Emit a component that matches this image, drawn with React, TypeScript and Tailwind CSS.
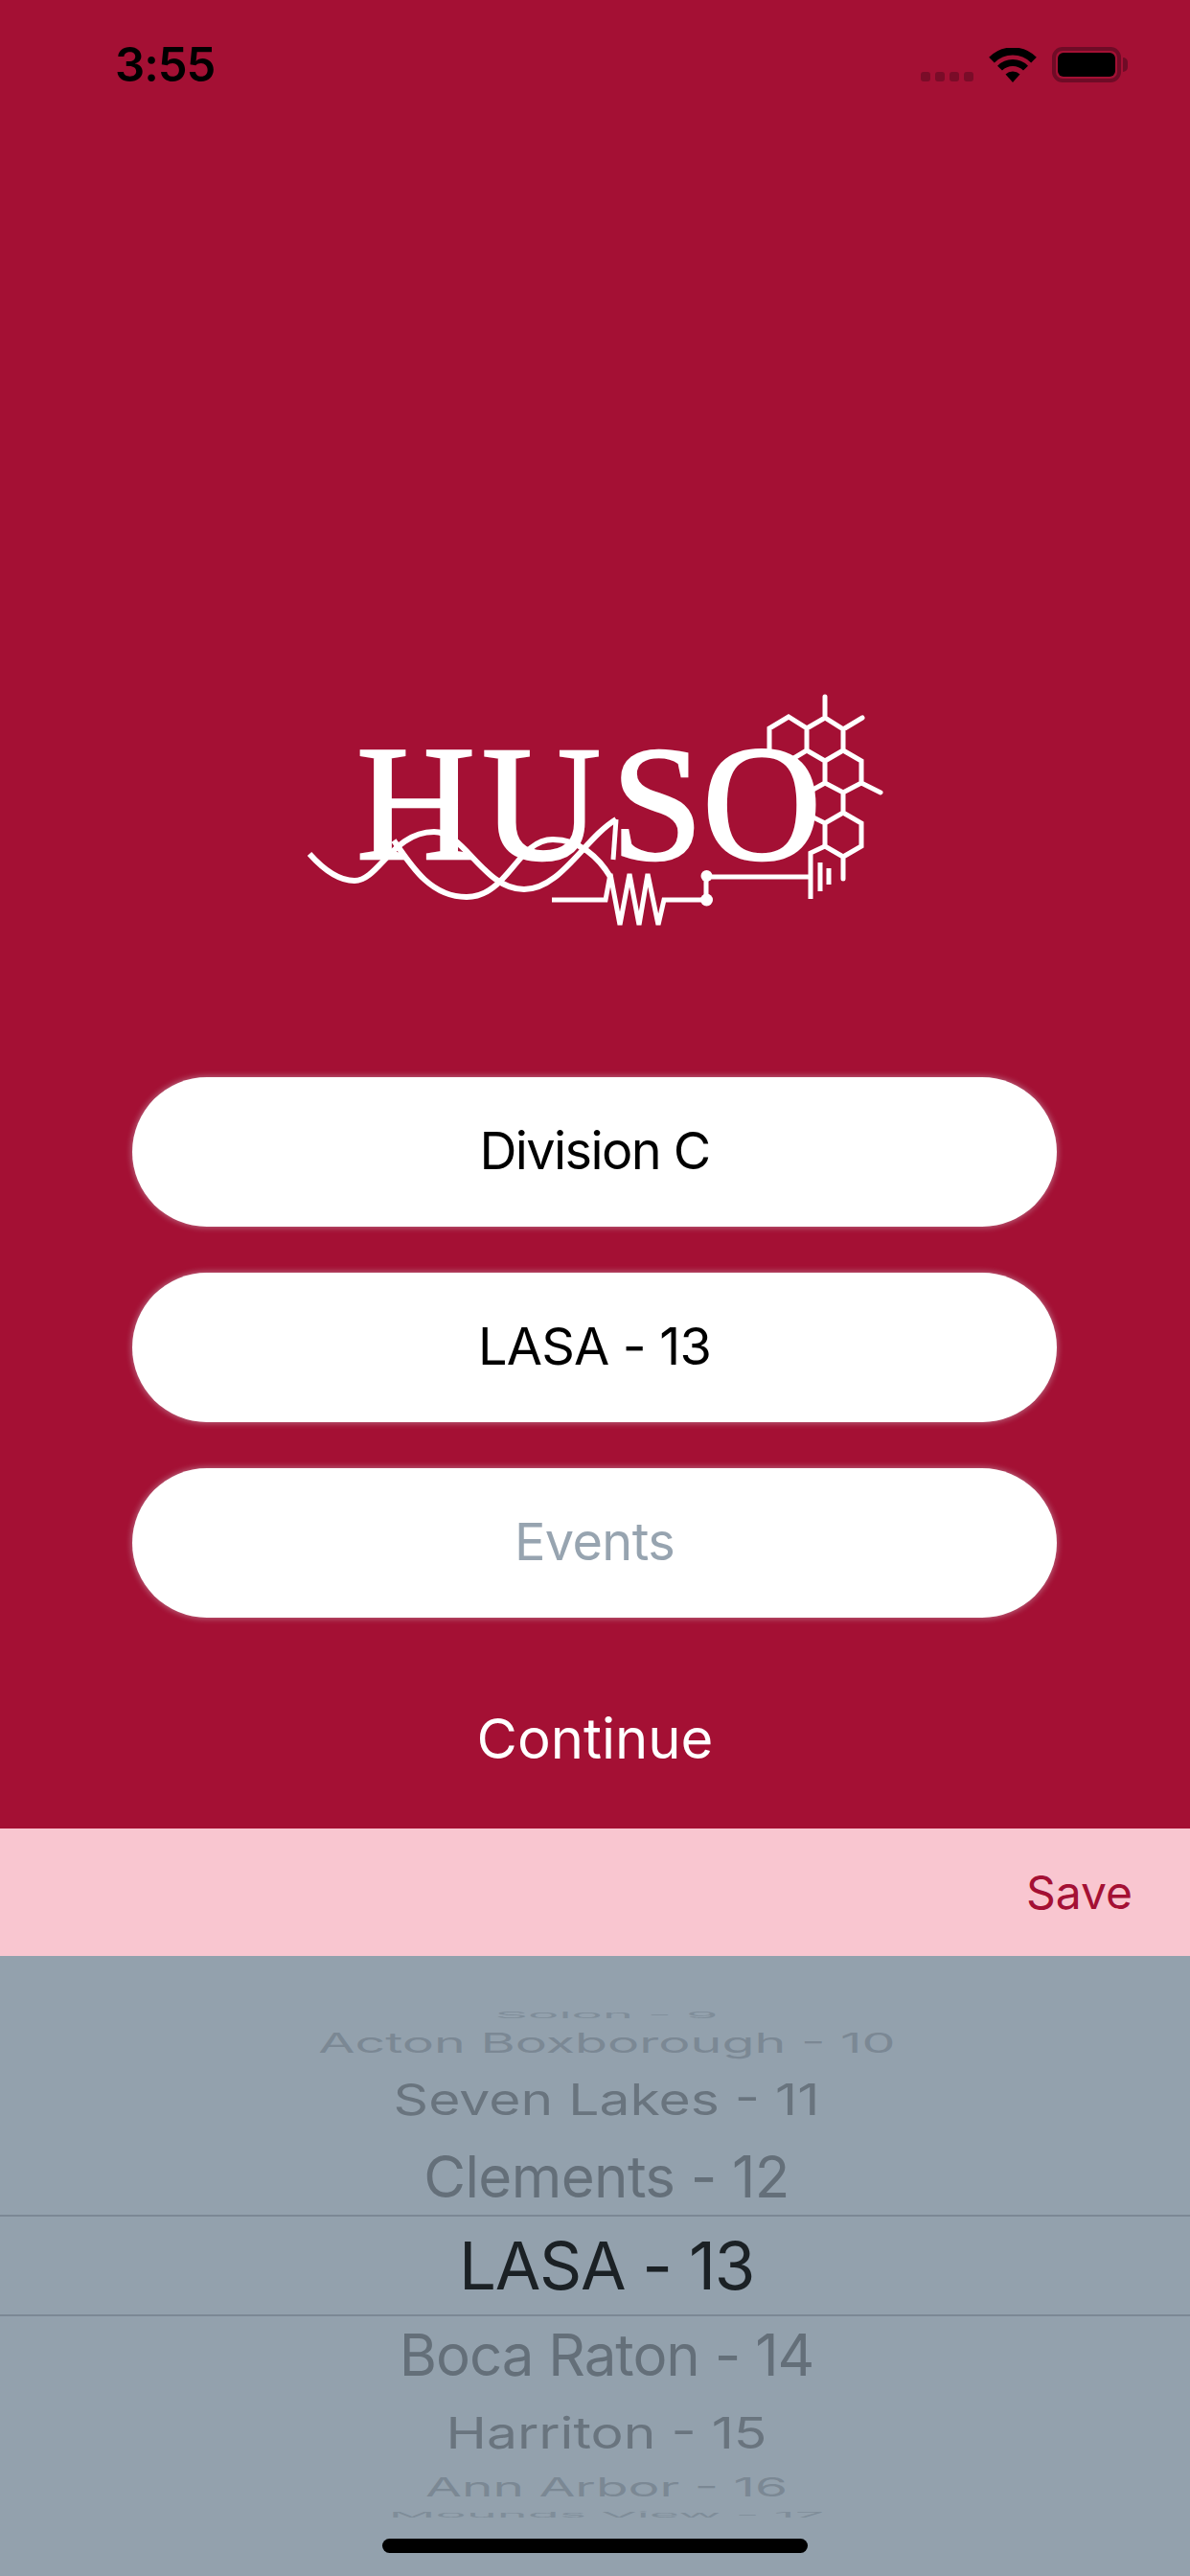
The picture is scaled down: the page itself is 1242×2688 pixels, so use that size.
const pickerRows = [
  { label: "Solon - 9", row: "h-[24px]", text: "text-[54px] scale-y-[0.17] text-[#7f8d99]" },
  { label: "Acton Boxborough - 10", row: "h-[34px]", text: "text-[50px] scale-y-[0.58] scale-x-[1.11] text-[#7b8894]" },
  { label: "Seven Lakes - 11", row: "h-[82px]", text: "text-[57px] scale-y-[0.8] text-[#69747e]" },
  { label: "Clements - 12", row: "h-[80px]", text: "text-[60px] tracking-[-0.6px] text-[#646f79]" },
];

const lowerRows = [
  { label: "Boca Raton - 14", row: "h-[80px]", text: "text-[60px] tracking-[-1px] text-[#646f79]" },
  { label: "Harriton - 15", row: "h-[82px]", text: "text-[57px] scale-y-[0.8] text-[#69747e]" },
  { label: "Ann Arbor - 16", row: "h-[32px]", text: "text-[55px] scale-y-[0.5] text-[#7b8894]" },
  { label: "Mounds View - 17", row: "h-[26px]", text: "text-[54px] scale-y-[0.14] text-[#7f8d99]" },
];

const PickerRow = ({ label, row, text }: { label: string; row: string; text: string }) => (
  <div className={`flex items-center justify-center pl-[24px] ${row}`}>
    <span className={`whitespace-nowrap leading-none ${text}`}>{label}</span>
  </div>
);

const Logo = () => (
  <svg
    viewBox="320 720 602 255"
    width="602"
    height="255"
    className="mx-auto block"
    fill="none"
    stroke="#fff"
  >
    <text
      x="372 503 638 733"
      y="896"
      fill="#fff"
      stroke="#fff"
      strokeWidth="2.5"
      fontFamily="'Liberation Serif', serif"
      fontSize="172"
    >
      HUSO
    </text>
    {/* waves */}
    <path
      d="M323 891 C340 910 355 919 370 919 C395 919 410 868 453 868 C485 868 505 928 547 928 C585 928 610 875 643 855"
      strokeWidth="6"
    />
    <path
      d="M411 877 C430 905 450 936 487 936 C530 936 540 876 577 876 C605 876 625 895 637 915"
      strokeWidth="6"
    />
    <path d="M643 855 L640 897" strokeWidth="5" />
    {/* resistor */}
    <path
      d="M576 939 H632 L637 912 L647 965 L657 912 L667 965 L676 912 L687 965 L693 939 H737 V915 H846"
      strokeWidth="5"
    />
    <circle cx="737.5" cy="939" r="6.5" fill="#fff" stroke="none" />
    <circle cx="737.5" cy="914" r="6" fill="#fff" stroke="none" />
    {/* ground */}
    <path d="M846 938 V890 L861 883" strokeWidth="5" />
    <path d="M856 900 V930" strokeWidth="5" />
    <path d="M865 906 V923" strokeWidth="5" />
    {/* hexagons */}
    <path
      d="M803 782 V760 L823 748 L842 760 V783 L827 792 M842 760 L861 749 L880 761 V783 L861 794 L842 783 M861 749 V727 M880 761 L900 749 M880 783 L899 794 V817 L880 827 L861 817 V794 M899 817 L919 827 M861 817 L843 827 M880 827 V848 L861 859 L843 850 M880 848 L899 859 V883 L880 894 L861 883 V859 M880 894 V917"
      strokeWidth="5"
      strokeLinecap="round"
    />
  </svg>
);

const StatusBar = () => (
  <div className="flex h-[132px] items-start justify-between pt-[44px] pl-[120px] pr-[65px]">
    <span className="text-[49px] font-semibold leading-[48px] tracking-[-1px] text-black">3:55</span>
    <div className="mt-[5px] flex items-end">
      <div className="mb-[1px] flex gap-[5px]">
        <div className="h-[10px] w-[10px] rounded-[3px] bg-[#7a0c28]" />
        <div className="h-[10px] w-[10px] rounded-[3px] bg-[#7a0c28]" />
        <div className="h-[10px] w-[10px] rounded-[3px] bg-[#7a0c28]" />
        <div className="h-[10px] w-[10px] rounded-[3px] bg-[#7a0c28]" />
      </div>
      <svg viewBox="0 0 50 36" width="50" height="36" className="ml-[16px]">
        <path d="M3 12.6 A31 31 0 0 1 47 12.6" fill="none" stroke="#000" strokeWidth="8" />
        <path d="M11.5 21.1 A19 19 0 0 1 38.5 21.1" fill="none" stroke="#000" strokeWidth="7" />
        <path d="M25 36 L17.5 27.5 A11 11 0 0 1 32.5 27.5 Z" fill="#000" />
      </svg>
      <div className="ml-[16px] flex h-[37px] w-[72px] items-center justify-center rounded-[11px] border-[4px] border-[#6f0b26]">
        <div className="h-[25px] w-[60px] rounded-[6px] bg-black" />
      </div>
      <div className="mb-[11px] ml-[2px] h-[15px] w-[5px] rounded-r-full bg-[#6f0b26]" />
    </div>
  </div>
);

const PillButton = ({ label, tone }: { label: string; tone: string }) => (
  <div
    className={`flex h-[156px] items-center justify-center rounded-full bg-white text-[54px] shadow-[0_0_6px_1px_rgba(210,210,220,0.45)] ${tone}`}
  >
    <span className="relative bottom-[2px]">{label}</span>
  </div>
);

export default function App() {
  return (
    <div className="relative flex h-[2688px] w-[1242px] flex-col overflow-hidden bg-[#a41034] font-['Inter',sans-serif]">
      <StatusBar />
      <div className="mt-[588px]">
        <Logo />
      </div>
      <div className="mt-[149px] flex flex-col gap-[48px] pl-[138px] pr-[139px]">
        <PillButton label="Division C" tone="text-black tracking-[-1.6px]" />
        <PillButton label="LASA - 13" tone="text-black tracking-[-0.8px]" />
        <PillButton label="Events" tone="text-[#97a4b0] tracking-[-0.6px]" />
      </div>
      <div className="mt-[88px] text-center text-[58px] leading-[76px] text-white">Continue</div>
      <div className="mt-[56px] flex h-[133px] items-center justify-end bg-[#f9c6d0] pr-[60px]">
        <span className="text-[48px] text-[#a41034]">Save</span>
      </div>
      <div className="flex-1 bg-[#93a1ad] pt-[50px]">
        {pickerRows.map((r) => (
          <PickerRow key={r.label} {...r} />
        ))}
        <div className="flex h-[106px] items-center justify-center border-y-2 border-[#7c8895] pl-[24px]">
          <span className="text-[69px] leading-none tracking-[-1.3px] text-[#1b2125]">LASA - 13</span>
        </div>
        {lowerRows.map((r) => (
          <PickerRow key={r.label} {...r} />
        ))}
      </div>
      <div className="absolute bottom-[24px] left-[399px] h-[15px] w-[444px] rounded-full bg-black" />
    </div>
  );
}
